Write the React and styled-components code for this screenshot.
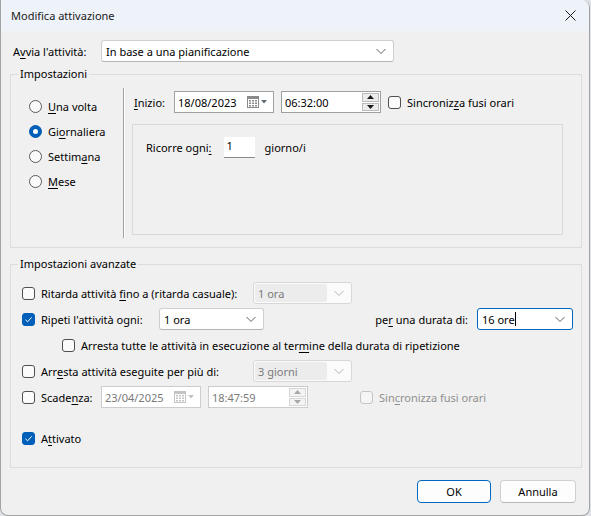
import React from "react";
import styled, { createGlobalStyle, css } from "styled-components";

const GlobalStyle = createGlobalStyle`
  * { box-sizing: border-box; }
  body {
    margin: 0;
    background: #dfe3e8;
    font-family: "Noto Sans", "Segoe UI", sans-serif;
    font-size: 11px;
    color: #000;
  }
`;

const Window = styled.div`
  width: 590px;
  height: 516px;
  border: 1px solid #a3a3a3;
  border-top: none;
  border-radius: 0 8px 8px 8px;
  background: #f0f0f0;
  overflow: hidden;
  display: flex;
  flex-direction: column;
`;

const TitleBar = styled.div`
  height: 31px;
  flex: none;
  background: #eef3f9;
  display: flex;
  align-items: center;
  justify-content: space-between;
  padding: 0 0 0 10px;
  font-size: 11px;
  color: #1a1a1a;
`;

const CloseButton = styled.button`
  width: 30px;
  height: 30px;
  border: none;
  background: transparent;
  display: flex;
  align-items: center;
  justify-content: center;
  margin-right: 4px;
  padding: 0;
`;

const Body = styled.div`
  flex: 1;
  padding: 9px 7px 0 9px;
  display: flex;
  flex-direction: column;
`;

const Row = styled.div`
  display: flex;
  align-items: center;
  height: ${(p) => p.$h || 26}px;
  margin-top: ${(p) => p.$mt || 0}px;
  padding-left: ${(p) => p.$pl || 0}px;
`;

const Label = styled.span`
  white-space: nowrap;
  width: ${(p) => (p.$w ? `${p.$w}px` : "auto")};
  margin-left: ${(p) => p.$ml || 0}px;
  text-align: ${(p) => p.$align || "left"};
  color: ${(p) => (p.$disabled ? "#8f8f8f" : "#000")};
  flex: none;
`;

const U = styled.span`
  text-decoration: underline;
  text-underline-offset: 2px;
`;

const Combo = styled.div`
  width: ${(p) => p.$w}px;
  height: 22px;
  margin-left: ${(p) => p.$ml || 0}px;
  background: ${(p) => (p.$disabled ? "#fbfbfb" : "#fff")};
  border: 1px solid
    ${(p) => (p.$focus ? "#0067c0" : p.$disabled ? "#d7d7d7" : "#cfcfcf")};
  border-bottom-color: ${(p) =>
    p.$focus ? "#0067c0" : p.$disabled ? "#d7d7d7" : "#b4b4b4"};
  border-radius: 3px;
  display: flex;
  align-items: center;
  padding: 1px;
  flex: none;
`;

const ComboText = styled.div`
  flex: 1;
  height: 100%;
  display: flex;
  align-items: center;
  padding-left: 3px;
  margin-right: 4px;
  color: ${(p) => (p.$disabled ? "#7a7a7a" : "#000")};
  background: ${(p) => (p.$disabled ? "#ececec" : "transparent")};
  border-radius: 2px;
`;

const Caret = styled.span`
  display: inline-block;
  width: 1px;
  height: 14px;
  background: #000;
`;

const Chevron = ({ disabled }) => (
  <svg width="16" height="10" viewBox="0 0 16 10" style={{ flex: "none", marginRight: 3 }}>
    <path
      d="M3.5 3 L8 7.5 L12.5 3"
      fill="none"
      stroke={disabled ? "#b5b5b5" : "#606060"}
      strokeWidth="1"
    />
  </svg>
);

const Field = styled.div`
  width: ${(p) => p.$w}px;
  height: 22px;
  margin-left: ${(p) => p.$ml || 0}px;
  background: #fff;
  border: 1px solid ${(p) => (p.$disabled ? "#cccccc" : "#a0a0a0")};
  display: flex;
  align-items: center;
  padding-left: 3px;
  color: ${(p) => (p.$disabled ? "#7a7a7a" : "#000")};
  flex: none;
`;

const FieldText = styled.span`
  flex: 1;
`;

const CalendarIcon = ({ disabled }) => {
  const c = disabled ? "#c4c4c4" : "#8a8a8a";
  return (
    <svg width="24" height="14" viewBox="0 0 24 14" style={{ marginRight: 2 }}>
      <rect x="0.5" y="1.5" width="11" height="11" fill="#fff" stroke={c} />
      <rect x="1" y="2" width="10" height="2" fill={c} />
      {[2, 5, 8].map((x) =>
        [5, 7.5, 10].map((y) => (
          <rect key={`${x}-${y}`} x={x} y={y} width="2" height="1.5" fill={c} />
        ))
      )}
      <path d="M14 5 L20 5 L17 8.5 Z" fill={disabled ? "#c4c4c4" : "#5f6b7a"} />
    </svg>
  );
};

const Spinner = styled.div`
  width: 17px;
  height: 18px;
  margin-left: auto;
  margin-right: 1px;
  display: flex;
  flex-direction: column;
  gap: 1px;
`;

const SpinBtn = styled.div`
  flex: 1;
  background: ${(p) => (p.$disabled ? "#f4f4f4" : "#ececec")};
  border: 1px solid ${(p) => (p.$disabled ? "#d6d6d6" : "#bdbdbd")};
  display: flex;
  align-items: center;
  justify-content: center;
`;

const Arrow = ({ up, disabled }) => (
  <svg width="7" height="4" viewBox="0 0 7 4">
    <path
      d={up ? "M0 4 L3.5 0 L7 4 Z" : "M0 0 L3.5 4 L7 0 Z"}
      fill={disabled ? "#a8a8a8" : "#1a1a1a"}
    />
  </svg>
);

const TimeField = ({ value, ml, disabled }) => (
  <Field $w={100} $ml={ml} $disabled={disabled}>
    <FieldText>{value}</FieldText>
    <Spinner>
      <SpinBtn $disabled={disabled}>
        <Arrow up disabled={disabled} />
      </SpinBtn>
      <SpinBtn $disabled={disabled}>
        <Arrow disabled={disabled} />
      </SpinBtn>
    </Spinner>
  </Field>
);

const DateField = ({ value, ml, disabled }) => (
  <Field $w={100} $ml={ml} $disabled={disabled}>
    <FieldText>{value}</FieldText>
    <CalendarIcon disabled={disabled} />
  </Field>
);

const Box = styled.span`
  width: 13px;
  height: 13px;
  flex: none;
  border-radius: 3px;
  margin-left: ${(p) => p.$ml || 0}px;
  margin-right: 6px;
  display: inline-flex;
  align-items: center;
  justify-content: center;
  ${(p) =>
    p.$checked
      ? css`
          background: #005fb8;
          border: 1px solid #005fb8;
        `
      : p.$disabled
      ? css`
          background: #f5f5f5;
          border: 1px solid #c4c4c4;
        `
      : css`
          background: #fbfbfb;
          border: 1px solid #4f4f4f;
        `}
`;

const Check = ({ checked, disabled, ml }) => (
  <Box $checked={checked} $disabled={disabled} $ml={ml}>
    {checked && (
      <svg width="9" height="9" viewBox="0 0 9 9">
        <path d="M1.5 4.8 L3.6 6.8 L7.6 2.4" fill="none" stroke="#fff" strokeWidth="1" />
      </svg>
    )}
  </Box>
);

const RadioCircle = styled.span`
  width: 13px;
  height: 13px;
  flex: none;
  border-radius: 50%;
  margin-right: 6px;
  display: inline-flex;
  align-items: center;
  justify-content: center;
  ${(p) =>
    p.$checked
      ? css`
          background: #005fb8;
          border: 1px solid #005fb8;
        `
      : css`
          background: #fbfbfb;
          border: 1px solid #5a5a5a;
        `}
`;

const Dot = styled.span`
  width: 5px;
  height: 5px;
  border-radius: 50%;
  background: #fff;
`;

const Group = styled.fieldset`
  margin: ${(p) => p.$mt || 0}px 0 0 0;
  padding: 0;
  border: 1px solid #dcdcdc;
  min-width: 0;
  width: 572px;
  height: ${(p) => p.$h}px;
`;

const Legend = styled.legend`
  padding: 0 2px;
  margin-left: 7px;
  line-height: 16px;
  height: 16px;
`;

const GroupInner = styled.div`
  display: flex;
  padding-top: 6px;
`;

const RadioColumn = styled.div`
  width: 112px;
  padding: 6px 0 0 18px;
  display: flex;
  flex-direction: column;
`;

const RadioItem = styled.div`
  height: 25px;
  display: flex;
  align-items: center;
`;

const Divider = styled.div`
  width: 2px;
  height: 150px;
  border-left: 1px solid #a0a0a0;
  border-right: 1px solid #ffffff;
  flex: none;
`;

const RightPane = styled.div`
  flex: 1;
  padding: 3px 0 0 7px;
  display: flex;
  flex-direction: column;
`;

const InnerBox = styled.div`
  margin-top: 11px;
  width: 431px;
  height: 111px;
  border: 1px solid #d9d9d9;
  padding: 12px 0 0 13px;
`;

const SmallInput = styled.div`
  width: 31px;
  height: 21px;
  background: #fff;
  border-bottom: 1px solid #8a8a8a;
  margin-left: 12px;
  padding: 1px 0 0 3px;
  flex: none;
`;

const AdvancedInner = styled.div`
  padding: 8px 0 0 11px;
  display: flex;
  flex-direction: column;
`;

const Footer = styled.div`
  display: flex;
  justify-content: flex-end;
  gap: 9px;
  margin-top: 12px;
  padding-right: 6px;
`;

const Button = styled.button`
  width: ${(p) => p.$w}px;
  height: 23px;
  font-family: inherit;
  font-size: 11px;
  color: #000;
  background: #fdfdfd;
  border: 1px solid ${(p) => (p.$primary ? "#0067c0" : "#d0d0d0")};
  border-bottom-color: ${(p) => (p.$primary ? "#0067c0" : "#b8b8b8")};
  border-radius: 4px;
  padding: 0;
`;

export default function App() {
  return (
    <>
      <GlobalStyle />
      <Window>
        <TitleBar>
          <span>Modifica attivazione</span>
          <CloseButton aria-label="Chiudi">
            <svg width="11" height="11" viewBox="0 0 11 11">
              <path d="M0.5 0.5 L10.5 10.5 M10.5 0.5 L0.5 10.5" stroke="#1a1a1a" strokeWidth="1" />
            </svg>
          </CloseButton>
        </TitleBar>
        <Body>
          <Row $h={22} $pl={3}>
            <Label $w={88}>
              A<U>v</U>via l'attività:
            </Label>
            <Combo $w={293}>
              <ComboText>In base a una pianificazione</ComboText>
              <Chevron />
            </Combo>
          </Row>

          <Group $mt={4} $h={182}>
            <Legend>Impostazioni</Legend>
            <GroupInner>
              <RadioColumn>
                <RadioItem>
                  <RadioCircle />
                  <span>
                    <U>U</U>na volta
                  </span>
                </RadioItem>
                <RadioItem>
                  <RadioCircle $checked>
                    <Dot />
                  </RadioCircle>
                  <span>
                    Gi<U>o</U>rnaliera
                  </span>
                </RadioItem>
                <RadioItem>
                  <RadioCircle />
                  <span>
                    Settim<U>a</U>na
                  </span>
                </RadioItem>
                <RadioItem>
                  <RadioCircle />
                  <span>
                    <U>M</U>ese
                  </span>
                </RadioItem>
              </RadioColumn>
              <Divider />
              <RightPane>
                <Row $h={22} $pl={2}>
                  <Label $w={40}>
                    <U>I</U>nizio:
                  </Label>
                  <DateField value="18/08/2023" />
                  <TimeField value="06:32:00" ml={7} />
                  <Check ml={7} />
                  <Label>
                    Sincroniz<U>z</U>a fusi orari
                  </Label>
                </Row>
                <InnerBox>
                  <Row $h={21}>
                    <Label>
                      Ricorre ogni<U>:</U>
                    </Label>
                    <SmallInput>1</SmallInput>
                    <Label $ml={10}>giorno/i</Label>
                  </Row>
                </InnerBox>
              </RightPane>
            </GroupInner>
          </Group>

          <Group $mt={8} $h={212}>
            <Legend>Impostazioni avanzate</Legend>
            <AdvancedInner>
              <Row>
                <Check />
                <Label $w={212}>
                  Ritarda attività <U>f</U>ino a (ritarda casuale):
                </Label>
                <Combo $w={99} $disabled>
                  <ComboText $disabled>1 ora</ComboText>
                  <Chevron disabled />
                </Combo>
              </Row>
              <Row>
                <Check checked />
                <Label $w={118}>Ripeti l'attività ogni:</Label>
                <Combo $w={105}>
                  <ComboText>1 ora</ComboText>
                  <Chevron />
                </Combo>
                <Label $w={204} $align="right">
                  pe<U>r</U> una durata di:
                </Label>
                <Combo $w={96} $ml={9} $focus>
                  <ComboText>
                    16 ore
                    <Caret />
                  </ComboText>
                  <Chevron />
                </Combo>
              </Row>
              <Row>
                <Check ml={40} />
                <Label>
                  Arresta tutte le attività in esecuzione al ter<U>m</U>ine della durata di
                  ripetizione
                </Label>
              </Row>
              <Row>
                <Check />
                <Label $w={212}>
                  Arr<U>e</U>sta attività eseguite per più di:
                </Label>
                <Combo $w={99} $disabled>
                  <ComboText $disabled>3 giorni</ComboText>
                  <Chevron disabled />
                </Combo>
              </Row>
              <Row>
                <Check />
                <Label $w={60}>
                  Scade<U>n</U>za:
                </Label>
                <DateField value="23/04/2025" disabled />
                <TimeField value="18:47:59" ml={7} disabled />
                <Check ml={52} disabled />
                <Label $disabled>
                  Sin<U>c</U>ronizza fusi orari
                </Label>
              </Row>
              <Row $mt={15}>
                <Check checked />
                <Label>
                  A<U>t</U>tivato
                </Label>
              </Row>
            </AdvancedInner>
          </Group>

          <Footer>
            <Button $w={74} $primary>
              OK
            </Button>
            <Button $w={76}>Annulla</Button>
          </Footer>
        </Body>
      </Window>
    </>
  );
}
